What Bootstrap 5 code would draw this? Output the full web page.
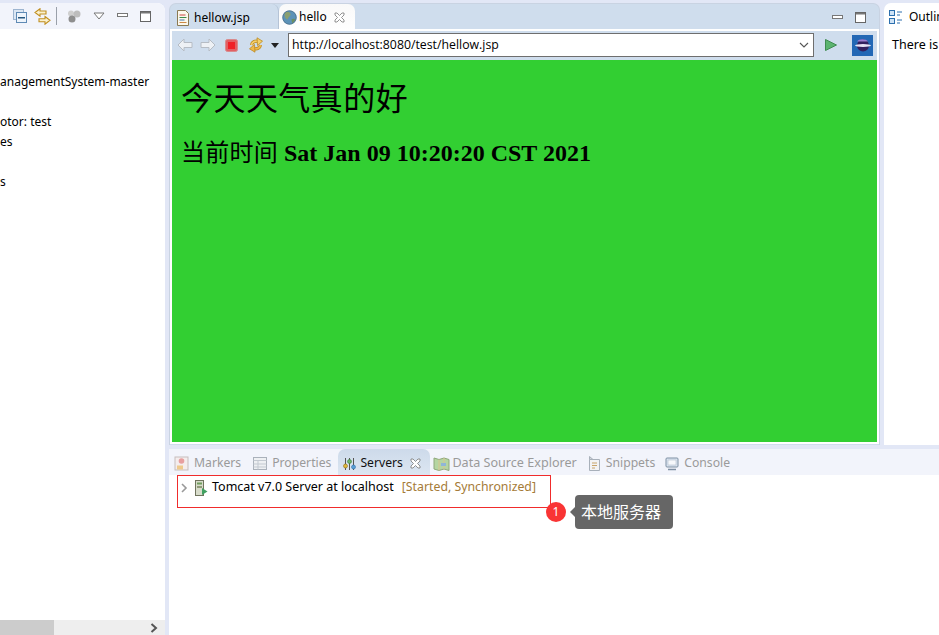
<!DOCTYPE html>
<html lang="zh">
<head>
<meta charset="utf-8">
<title>Eclipse</title>
<link href="https://cdn.jsdelivr.net/npm/bootstrap@5.3.0/dist/css/bootstrap.min.css" rel="stylesheet">
<style>
html,body{margin:0;height:635px;overflow:hidden}
body{background:#e2e7f6;font-family:"Noto Sans","Open Sans","Noto Sans CJK SC",sans-serif;font-size:12px;color:#000;position:relative}
svg{flex:none;display:block}
.sl2{margin-left:2px}.sl3{margin-left:3px}.sl5{margin-left:5px}.sl7{margin-left:7px}.sl9{margin-left:9px}.sl10{margin-left:10px}.sl11{margin-left:11px}.sl12{margin-left:12px}.sl15{margin-left:15px}
.shell{width:939px;height:635px}
.leftpane{width:165px;margin-top:3px;background:#fff;border-top-right-radius:8px;flex:none;overflow:hidden}
.lefthead{height:26px;background:#f2f4fb;padding-left:13px}
.headsep{width:1px;height:18px;background:#9aa0aa}
.tree-wrap{padding-top:43px;white-space:nowrap}
.tree-line{height:20px;line-height:20px;font-size:12px}
.hscroll{height:15px;background:#eee}
.thumb{width:54px;background:#ccc}
.chev{margin-right:7px}
.rightcol{width:774px;margin-left:4px}
.toprow{height:442px;margin-top:3px}
.editor{width:711px;background:#cfdded;border-radius:7px 7px 0 0;padding:0 3px;border:1px solid #c9d3e2;border-bottom:0;flex:none}
.edtabs{height:27px;margin:0 -3px;padding:0 13px 0 0}
.edtab{height:27px;font-size:12px;border-radius:7px 7px 0 0;white-space:nowrap}
.tab-off{width:109px;padding-left:7px;border-right:1px solid #b5c3d6;gap:5px}
.tab-on{width:76px;padding:0 0 1px 3px;background:linear-gradient(#f9f9f9,#fff);gap:2px}
.winbtns{margin-left:auto;gap:12px}
.brow{height:411px;margin:0 -1px;box-shadow:0 0 0 2px #fff;position:relative}
.brow-bar{height:28px;background:#cfdded;padding-left:5px}
.urlbox{width:526px;height:24px;border:1px solid #6e6e6e;background:#fff;padding-left:3px;font-size:12.3px;margin-left:9px;font-family:"Open Sans","Noto Sans",sans-serif}
.greenpage{background:#32cf32;height:382px;margin-top:1px;padding:19px 9px}
.greenpage h1,.greenpage h2{font-family:"Liberation Serif","Noto Sans CJK SC",serif;color:#000;margin:0}
.greenpage h1{font-size:32px;font-weight:400;line-height:40px;margin-bottom:19px;letter-spacing:.45px}
.greenpage h2{font-size:24px;font-weight:700;line-height:30px}
.cjk{font-weight:400;letter-spacing:.25px}
.outlinepane{margin-left:4px;background:#fff;border-radius:7px 0 0 0;flex:1;overflow:hidden;white-space:nowrap}
.outhead{height:28px;padding-left:5px;font-size:12px;gap:6px}
.outbody{padding:5px 0 0 8px;font-size:12.5px}
.bottompane{height:186px;margin-top:4px;background:#fff}
.bottabs{height:26px;background:#f2f4fb;padding-left:5px;color:#9a9a9a;font-size:12.2px;white-space:nowrap}
.btab{height:26px;padding-top:3px;gap:5px;margin-right:11px}
.btab-m{margin-right:12px}
.btab-p{margin-right:11px}
.btab-d{gap:2px;margin-right:11px}
.btab-s{margin-right:10px}
.dtext{font-size:12.6px}
.btab-on{height:26px;padding:3px 4px 0 5px;background:linear-gradient(#cddaea,#dce6f2);border-radius:7px 7px 0 0;color:#111;width:92px;gap:4px;margin:0 3px 0 -4px}
.srvrow{width:374px;height:33px;border:1px solid #f02c2c;margin-left:8px;padding:0 0 8px 1px;font-size:12.5px;white-space:nowrap}
.srvname{margin-left:4px}
.srvstatus{color:#a57b37;margin-left:8px;font-size:12.3px}
.callnum{position:absolute;left:546px;top:502px;width:20px;height:20px;background:#f93434;color:#fff;border-radius:50%;font-size:12px;line-height:20px;text-align:center}
.calltip{position:absolute;left:575px;top:495px;width:98px;height:34px;background:#666;color:#fff;border-radius:4px;font-size:16px;line-height:33px;padding-left:6px;font-family:"Noto Sans CJK SC",sans-serif}
.calltip::before{content:"";position:absolute;left:-5px;top:12px;border-style:solid;border-width:5px 5px 5px 0;border-color:transparent #666 transparent transparent}
</style>
</head>
<body>
<div class="shell d-flex">
  <div class="leftpane d-flex flex-column">
    <div class="lefthead d-flex align-items-center">
      <svg width="14" height="14" viewBox="0 0 14 14"><rect x=".5" y=".5" width="10" height="10" fill="#dbe6f3" stroke="#9db5d0"/><rect x="3.5" y="3.5" width="10" height="10" fill="#eef4fb" stroke="#5f8ab5"/><rect x="5" y="8" width="7" height="1.500" fill="#27577f"/></svg>
      <svg class="sl7" width="17" height="17" viewBox="0 0 17 17"><path d="M6 .8 1 4.500l5 3.700V6h6V3H6z" fill="#fbf0cc" stroke="#c08f20" stroke-width="1.100"/><path d="M11 8.500l5 3.800-5 3.900v-2.400H5v-3h6z" fill="#fbf0cc" stroke="#c08f20" stroke-width="1.100"/></svg>
      <span class="d-block headsep sl5"></span>
      <svg class="sl10" width="14" height="14" viewBox="0 0 14 14"><circle cx="4" cy="4.500" r="3" fill="#cfcfcf"/><circle cx="10" cy="5" r="3.500" fill="#bdbdbd"/><circle cx="5" cy="10" r="3.500" fill="#8e8e8e"/></svg>
      <svg class="sl12" width="12" height="8" viewBox="0 0 12 8"><path d="M1 1h10L6 7z" fill="#fff" stroke="#777"/></svg>
      <svg class="sl12" width="11" height="6" viewBox="0 0 11 6"><rect x=".5" y=".5" width="10" height="3" fill="#fff" stroke="#777"/></svg>
      <svg class="sl12" width="11" height="11" viewBox="0 0 11 11"><rect x=".5" y=".5" width="10" height="10" fill="#fff" stroke="#666"/><rect x="1" y="1" width="9" height="1.500" fill="#777"/></svg>
    </div>
    <div class="tree-wrap flex-grow-1 overflow-hidden">
      <div class="tree-line">anagementSystem-master</div>
      <div class="tree-line">&nbsp;</div>
      <div class="tree-line">otor: test</div>
      <div class="tree-line">es</div>
      <div class="tree-line">&nbsp;</div>
      <div class="tree-line">s</div>
    </div>
    <div class="hscroll d-flex align-items-stretch justify-content-between">
      <div class="thumb"></div>
      <svg class="chev align-self-center" width="8" height="10" viewBox="0 0 8 10"><path d="M1.500 1 6 5 1.500 9" fill="none" stroke="#555" stroke-width="2"/></svg>
    </div>
  </div>
  <div class="rightcol d-flex flex-column">
    <div class="toprow d-flex">
      <div class="editor">
        <div class="edtabs d-flex align-items-center">
          <div class="edtab tab-off d-flex align-items-center">
            <svg width="12" height="16" viewBox="0 0 12 16"><path d="M.5.5h8l3 3v12H.5z" fill="#fbf8ec" stroke="#8a7a52"/><path d="M2.500 5h6" stroke="#c44"/><path d="M2.500 7.500h7" stroke="#3a8a4a"/><path d="M2.500 10h5" stroke="#47a"/><path d="M2.500 12.500h7" stroke="#c84"/></svg>
            <span>hellow.jsp</span>
          </div>
          <div class="edtab tab-on d-flex align-items-center">
            <svg width="15" height="15" viewBox="0 0 16 16"><circle cx="8" cy="8" r="7.500" fill="#5d93b8"/><path d="M3 3c3-2 5-1 6 1 1 2-2 3-3 6-2 0-4-3-3-7z" fill="#8a9f70"/><path d="M10 10c2-1 4-1 4 1l-3 3z" fill="#6d8f60"/><circle cx="8" cy="8" r="7.200" fill="none" stroke="#4d6f8a" stroke-width=".8"/></svg>
            <span>hello</span>
            <svg class="sl5" width="11" height="11" viewBox="0 0 11 11"><path d="M1 1h2l2.500 2.500L8 1h2v2L7.500 5.500 10 8v2H8L5.500 7.500 3 10H1V8l2.500-2.500L1 3z" fill="#fff" stroke="#777" stroke-width=".8"/></svg>
          </div>
          <div class="winbtns d-flex align-items-center">
            <svg width="11" height="5" viewBox="0 0 11 5"><rect x=".5" y=".5" width="10" height="3" fill="#fff" stroke="#777"/></svg>
            <svg width="11" height="11" viewBox="0 0 11 11"><rect x=".5" y=".5" width="10" height="10" fill="#fff" stroke="#666"/><rect x="1" y="1" width="9" height="1.500" fill="#777"/></svg>
          </div>
        </div>
        <div class="brow">
          <div class="brow-bar d-flex align-items-center">
            <svg width="16" height="14" viewBox="0 0 16 14"><path d="M1 7l6-6v3.500h8v5H7V13z" fill="#eef1f5" stroke="#b6bcc4"/></svg>
            <svg class="sl7" width="16" height="14" viewBox="0 0 16 14"><path d="M15 7 9 1v3.500H1v5h8V13z" fill="#eef1f5" stroke="#b6bcc4"/></svg>
            <svg class="sl9" width="13" height="13" viewBox="0 0 13 13"><rect x=".5" y=".5" width="12" height="12" rx="2" fill="#e25f63" stroke="#d98a8c"/><rect x="3" y="3" width="7" height="7" fill="#ef1f26"/></svg>
            <svg class="sl10" width="16" height="16" viewBox="0 0 16 16"><path d="M3.500 8C4 5 7 3.500 10 4.500" fill="none" stroke="#bd8a1e" stroke-width="3.200"/><path d="M3.500 8C4 5 7 3.500 10 4.500" fill="none" stroke="#f5d06a" stroke-width="1.600"/><path d="M9 .8l5.500 3.400L9.500 8.500z" fill="#f5d06a" stroke="#bd8a1e" stroke-width=".8"/><path d="M12.500 8C12 11 9 12.500 6 11.500" fill="none" stroke="#bd8a1e" stroke-width="3.200"/><path d="M12.500 8C12 11 9 12.500 6 11.500" fill="none" stroke="#f0b84a" stroke-width="1.600"/><path d="M7 15.200 1.500 11.800 6.500 7.500z" fill="#f0b84a" stroke="#bd8a1e" stroke-width=".8"/></svg>
            <svg class="sl7" width="8" height="5" viewBox="0 0 8 5"><path d="M0 0h8L4 5z" fill="#222"/></svg>
            <div class="urlbox d-flex justify-content-between align-items-center">
              <span>http://localhost:8080/test/hellow.jsp</span>
              <svg class="me-1" width="10" height="6" viewBox="0 0 10 6"><path d="M1 1l4 4 4-4" fill="none" stroke="#555" stroke-width="1.100"/></svg>
            </div>
            <svg class="sl11" width="12" height="12" viewBox="0 0 12 12"><path d="M.5.5 11.500 6 .5 11.500z" fill="#5bb46f" stroke="#3f8a50"/></svg>
            <svg class="sl15" width="21" height="21" viewBox="0 0 21 21"><rect width="21" height="21" fill="#2368b5"/><circle cx="11" cy="10.500" r="6" fill="#33205f"/><path d="M5 6.500c2-3 9-3 11 0z" fill="#9a7ccf"/><ellipse cx="11" cy="10.500" rx="8" ry="1.500" fill="#e7e1f5"/></svg>
          </div>
          <div class="greenpage">
            <h1>今天天气真的好</h1>
            <h2><span class="cjk">当前时间</span> Sat Jan 09 10:20:20 CST 2021</h2>
          </div>
        </div>
      </div>
      <div class="outlinepane">
        <div class="outhead d-flex align-items-center">
          <svg width="14" height="14" viewBox="0 0 14 14"><rect x=".5" y=".5" width="5" height="5" fill="#cfe3f6" stroke="#2c6fae"/><rect x=".5" y="8.500" width="5" height="5" fill="#cfe3f6" stroke="#2c6fae"/><path d="M8 2h5M8 5h3M8 10h5M8 13h3" stroke="#2c6fae"/></svg>
          <span>Outlin</span>
        </div>
        <div class="outbody">There is</div>
      </div>
    </div>
    <div class="bottompane">
      <div class="bottabs d-flex align-items-center">
        <div class="btab btab-m d-flex align-items-center">
          <svg width="15" height="15" viewBox="0 0 15 15"><rect x="1" y="1" width="13" height="13" fill="#f4eded" stroke="#c6bdbd"/><circle cx="7.500" cy="5" r="2.800" fill="#e79f9f"/><rect x="3" y="9.500" width="6" height="4" fill="#eec98c"/></svg>
          <span>Markers</span>
        </div>
        <div class="btab btab-p d-flex align-items-center">
          <svg width="14" height="13" viewBox="0 0 14 13"><rect x=".5" y=".5" width="13" height="12" fill="#eef0f3" stroke="#aab1bb"/><path d="M.5 3.500h13M5 3.500v9M.5 7h13M.5 10h13" stroke="#c3c9d1"/></svg>
          <span>Properties</span>
        </div>
        <div class="btab-on d-flex align-items-center">
          <svg width="13" height="14" viewBox="0 0 13 14"><path d="M2.500 1v12M6.500 1v12M10.500 1v12" stroke="#555"/><circle cx="2.500" cy="9" r="2" fill="#e2b83c" stroke="#8a6d10" stroke-width=".6"/><circle cx="10.500" cy="10" r="2" fill="#5aa0d8" stroke="#2d6da8" stroke-width=".6"/><circle cx="6.500" cy="4.500" r="2" fill="#6cb56c" stroke="#3c7c3c" stroke-width=".6"/></svg>
          <span>Servers</span>
          <svg class="sl3" width="11" height="11" viewBox="0 0 11 11"><path d="M1 1h2l2.500 2.500L8 1h2v2L7.500 5.500 10 8v2H8L5.500 7.500 3 10H1V8l2.500-2.500L1 3z" fill="#fff" stroke="#777" stroke-width=".8"/></svg>
        </div>
        <div class="btab btab-d d-flex align-items-center">
          <svg width="17" height="16" viewBox="0 0 17 16"><path d="M1 2l5 1.500L11 2l5 1.500v11L11 13l-5 1.500L1 13z" fill="#b5d5a2" stroke="#8fa87c"/><path d="M6 3.500v11M11 2v11" stroke="#d8c48e"/><path d="M8 7h5v3H8z" fill="#8fb6d8"/></svg>
          <span class="dtext">Data Source Explorer</span>
        </div>
        <div class="btab btab-s d-flex align-items-center">
          <svg width="13" height="15" viewBox="0 0 13 15"><path d="M1.500 3.500h10v11h-10z" fill="#f2f3f5" stroke="#a8b0ba"/><path d="M1.500.5 5 3.500H1.500z" fill="#d2d6dc" stroke="#a8b0ba"/><path d="M4 7h5M4 9.500h5M4 12h3" stroke="#c8a46a"/></svg>
          <span>Snippets</span>
        </div>
        <div class="btab d-flex align-items-center">
          <svg width="14" height="14" viewBox="0 0 14 14"><rect x="1" y="1" width="12" height="9" rx="1" fill="#dbe5f0" stroke="#7f90a3"/><rect x="3" y="3" width="8" height="5" fill="#f6f8fb" stroke="#a7b5c4" stroke-width=".5"/><path d="M3 12.500h8" stroke="#7f90a3" stroke-width="1.500"/></svg>
          <span>Console</span>
        </div>
      </div>
      <div class="srvrow d-flex align-items-center">
        <svg class="sl2" width="7" height="10" viewBox="0 0 7 10"><path d="M1 1l4 4-4 4" fill="none" stroke="#999" stroke-width="1.600"/></svg>
        <svg class="sl7" width="13" height="16" viewBox="0 0 13 16"><rect x=".5" y=".5" width="8" height="15" fill="#d8dccb" stroke="#70745e"/><rect x="2" y="2.500" width="5" height="2" fill="#6f9b5e"/><rect x="2" y="6" width="5" height="2" fill="#8f9b78"/><path d="M7 8l5.500 3.500L7 15z" fill="#3fa060"/></svg>
        <span class="srvname">Tomcat v7.0 Server at localhost</span>
        <span class="srvstatus">[Started, Synchronized]</span>
      </div>
    </div>
  </div>
</div>
<div class="callnum">1</div>
<div class="calltip">本地服务器</div>
<script src="https://cdn.jsdelivr.net/npm/bootstrap@5.3.0/dist/js/bootstrap.bundle.min.js"></script>
</body>
</html>
